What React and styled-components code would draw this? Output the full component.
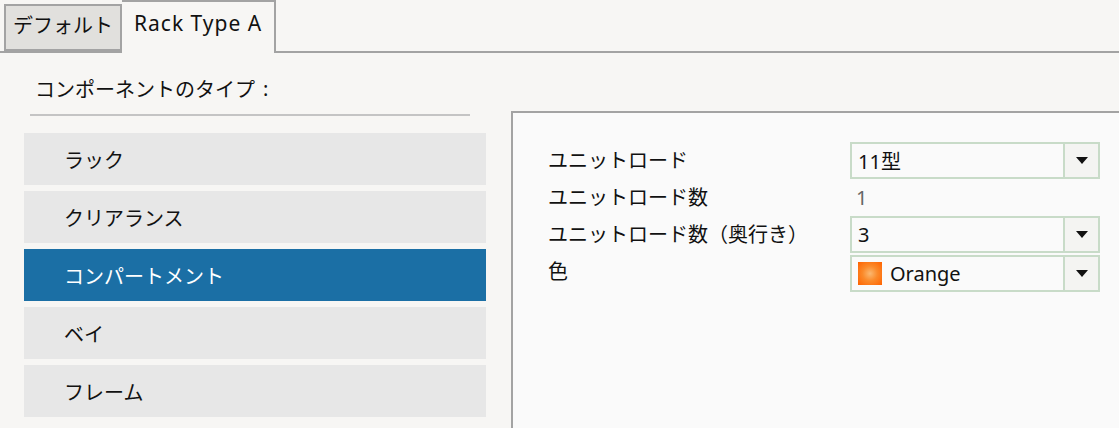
import React from 'react';
import styled, { createGlobalStyle } from 'styled-components';

const GlobalStyle = createGlobalStyle`
html, body {
  margin: 0;
  padding: 0;
  background: #f7f6f4;
  height: 100%;
  overflow: hidden;
}
body {
  font-family: "Noto Sans", "Noto Sans CJK JP", sans-serif;
  font-size: 20px;
  color: #111;
}
`;

const Page = styled.div`
width: 1119px;
height: 428px;
display: flex;
flex-direction: column;
overflow: hidden;
`;

const TabBar = styled.div`
height: 53px;
display: flex;
align-items: flex-end;
padding-left: 4px;
border-bottom: 2px solid #a3a3a3;
box-sizing: border-box;
`;

const Tab = styled.div`
box-sizing: border-box;
height: ${(p) => (p.$active ? '53px' : '47px')};
margin-bottom: ${(p) => (p.$active ? '-2px' : '0')};
padding: ${(p) => (p.$active ? '0 12px 0 12px' : '0 7px 0 7px')};
display: flex;
align-items: center;
background: ${(p) => (p.$active ? '#f7f6f4' : '#e1e0dd')};
border: 2px solid #a3a3a3;
border-bottom: ${(p) => (p.$active ? 'none' : '2px solid #a3a3a3')};
border-left: ${(p) => (p.$active ? 'none' : '2px solid #a3a3a3')};
font-size: ${(p) => (p.$active ? '21px' : '20px')};
letter-spacing: ${(p) => (p.$active ? '1px' : '0')};
line-height: 1;
padding-bottom: ${(p) => (p.$active ? '8px' : '4px')};
`;

const Body = styled.div`
flex: 1;
display: flex;
`;

const Sidebar = styled.div`
width: 511px;
flex-shrink: 0;
padding: 17px 0 0 24px;
box-sizing: border-box;
`;

const SideTitle = styled.div`
padding-left: 11px;
height: 36px;
display: flex;
align-items: center;
`;

const Colon = styled.span`
margin-left: 8px;
`;

const Divider = styled.div`
width: 440px;
margin-left: 6px;
height: 2px;
background: #c4c4c4;
margin-top: 8px;
margin-bottom: 17px;
`;

const TypeList = styled.div`
display: flex;
flex-direction: column;
gap: 6px;
width: 462px;
`;

const TypeItem = styled.div`
height: 52px;
display: flex;
align-items: center;
padding-left: 40px;
background: ${(p) => (p.$selected ? '#1b6fa5' : '#e7e7e7')};
color: ${(p) => (p.$selected ? '#ffffff' : '#111')};
`;

const Panel = styled.div`
flex: 1;
margin-top: 58px;
border-top: 2px solid #a3a3a3;
border-left: 2px solid #a3a3a3;
background: #fafafa;
padding: 29px 19px 0 35px;
`;

const PropGrid = styled.div`
display: grid;
grid-template-columns: 302px 250px;
grid-auto-rows: 37px;
align-items: center;
`;

const Label = styled.div`
line-height: 1;
`;

const PlainValue = styled.div`
padding-left: 6px;
color: #666;
`;

const Combo = styled.div`
box-sizing: border-box;
height: 37px;
margin-top: ${(p) => (p.$gap ? '4px' : '0')};
border: 2px solid #c8dbc8;
background: #fafafa;
display: flex;
align-items: center;
`;

const ComboText = styled.div`
flex: 1;
display: flex;
align-items: center;
gap: 8px;
padding-left: 6px;
`;

const ComboButton = styled.div`
width: 33px;
height: 100%;
border-left: 2px solid #c8dbc8;
background: #f4f4f2;
display: flex;
align-items: center;
justify-content: center;
`;

const Arrow = styled.div`
width: 0;
height: 0;
border-left: 6px solid transparent;
border-right: 6px solid transparent;
border-top: 7px solid #111;
`;

const Swatch = styled.span`
width: 24px;
height: 23px;
background: radial-gradient(circle at 50% 50%, #fbb870 0%, #fb8a2a 45%, #ff6200 100%);
`;

const types = ['ラック', 'クリアランス', 'コンパートメント', 'ベイ', 'フレーム'];

function Select({ children, gap }) {
  return (
    <Combo $gap={gap}>
      <ComboText>{children}</ComboText>
      <ComboButton>
        <Arrow />
      </ComboButton>
    </Combo>
  );
}

export default function App() {
  return (
    <Page>
      <GlobalStyle />
      <TabBar>
        <Tab>デフォルト</Tab>
        <Tab $active>Rack Type A</Tab>
      </TabBar>
      <Body>
        <Sidebar>
          <SideTitle>
            コンポーネントのタイプ<Colon>:</Colon>
          </SideTitle>
          <Divider />
          <TypeList>
            {types.map((t) => (
              <TypeItem key={t} $selected={t === 'コンパートメント'}>
                {t}
              </TypeItem>
            ))}
          </TypeList>
        </Sidebar>
        <Panel>
          <PropGrid>
            <Label>ユニットロード</Label>
            <Select>11型</Select>
            <Label>ユニットロード数</Label>
            <PlainValue>1</PlainValue>
            <Label>ユニットロード数（奥行き）</Label>
            <Select>3</Select>
            <Label>色</Label>
            <Select gap>
              <Swatch />
              Orange
            </Select>
          </PropGrid>
        </Panel>
      </Body>
    </Page>
  );
}
